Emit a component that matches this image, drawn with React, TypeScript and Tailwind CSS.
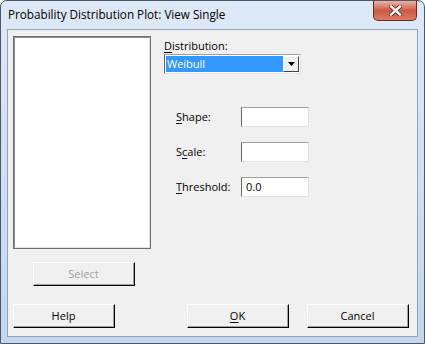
import React from 'react';

const font = { fontFamily: '"Open Sans", "Noto Sans", "Liberation Sans", sans-serif' };

const U: React.FC<{ children: React.ReactNode }> = ({ children }) => (
  <span className="underline underline-offset-2">{children}</span>
);

interface BtnProps {
  children: React.ReactNode;
  disabled?: boolean;
}

const Button: React.FC<BtnProps> = ({ children, disabled }) => (
  <div className="w-[102px] h-[24px] border-t border-l border-t-white border-l-white border-r border-b border-r-[#000] border-b-[#000]">
    <div className="h-full border-r border-b border-r-[#a0a0a0] border-b-[#a0a0a0] flex items-center justify-center bg-[#f0f0f0]">
      <span className={disabled ? 'text-[#a0a0a0]' : 'text-black'}>{children}</span>
    </div>
  </div>
);

const Field: React.FC<{ label: React.ReactNode; value?: string }> = ({ label, value }) => (
  <div className="flex items-center h-[20px]">
    <div className="w-[65px]">{label}</div>
    <div className="w-[68px] h-[20px] border-t border-l border-t-[#a0a0a0] border-l-[#696969] border-r border-b border-r-[#e3e3e3] border-b-[#e3e3e3] bg-white flex items-center pl-[4px]">
      {value}
    </div>
  </div>
);

const CloseButton: React.FC = () => (
  <div className="w-[44px] h-[20px] rounded-b-[5px] border border-t-0 border-[#6a2a20] bg-gradient-to-b from-[#eab3a6] via-[#cc5a45] to-[#dc7a66] flex items-center justify-center">
    <svg width="13" height="11" viewBox="0 0 13 11">
      <path d="M2 1.5 L11 9.5 M11 1.5 L2 9.5" stroke="#6a2a20" strokeWidth="4.2" strokeLinecap="square" />
      <path d="M2 1.5 L11 9.5 M11 1.5 L2 9.5" stroke="#ffffff" strokeWidth="2.4" strokeLinecap="square" />
    </svg>
  </div>
);

export default function App() {
  return (
    <div className="w-[425px] h-[344px] bg-white" style={font}>
      <div className="w-full h-full rounded-t-[7px] border border-[#4b5868] bg-gradient-to-b from-[#dde9f6] to-[#c3d6ec] flex flex-col text-[11px] leading-[14px]">
        {/* title bar */}
        <div className="h-[28px] flex items-start justify-between pl-[7px]">
          <div className="pt-[6px] text-[11.7px] text-black">Probability Distribution Plot: View Single</div>
          <div className="mr-[7px]">
            <CloseButton />
          </div>
        </div>
        {/* client area */}
        <div className="flex-1 mx-[6px] mb-[6px] border border-[#8ea3bd] bg-[#f0f0f0] flex flex-col pt-[6px] pl-[5px]">
          <div className="flex">
            <div className="w-[138px] h-[213px] border border-[#6f6f6f]">
              <div className="h-full border border-t-[#8a8a8a] border-l-[#8a8a8a] border-r-[#e3e3e3] border-b-[#e3e3e3] bg-white" />
            </div>
            <div className="ml-[13px] flex flex-col">
              <div className="mt-[3px] h-[14px]">
                <U>D</U>istribution:
              </div>
              <div className="mt-[1px] w-[137px] h-[20px] border-t border-l border-t-[#a0a0a0] border-l-[#696969] border-r border-b border-r-[#e3e3e3] border-b-[#e3e3e3] bg-white flex items-center p-[1px]">
                <div className="flex-1 h-full bg-[#3399ff] text-white flex items-center pl-[1px]">Weibull</div>
                <div className="w-[16px] h-full border-t border-l border-t-white border-l-white border-r border-b border-r-[#404040] border-b-[#404040] bg-[#f0f0f0] flex items-center justify-center">
                  <svg width="7" height="4" viewBox="0 0 7 4">
                    <path d="M0 0 H7 L3.5 4 Z" fill="#000" />
                  </svg>
                </div>
              </div>
              <div className="mt-[33px] ml-[12px] flex flex-col gap-[15px]">
                <Field label={<><U>S</U>hape:</>} />
                <Field label={<>S<U>c</U>ale:</>} />
                <Field label={<><U>T</U>hreshold:</>} value="0.0" />
              </div>
            </div>
          </div>
          <div className="mt-[13px] ml-[20px]">
            <Button disabled>Select</Button>
          </div>
          <div className="mt-[18px] flex">
            <Button>Help</Button>
            <div className="ml-[72px]">
              <Button><U>O</U>K</Button>
            </div>
            <div className="ml-[18px]">
              <Button>Cancel</Button>
            </div>
          </div>
        </div>
      </div>
    </div>
  );
}
